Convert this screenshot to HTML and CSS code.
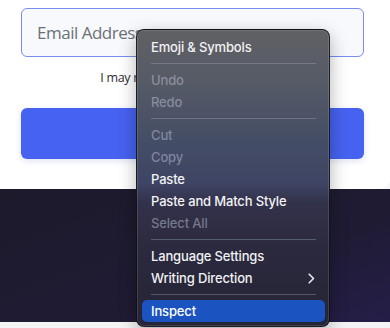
FILE: index.html
```html
<!DOCTYPE html>
<html lang="en">
<head>
    <meta charset="UTF-8">
    <meta name="viewport" content="width=device-width, initial-scale=1.0">
    <title>Newsletter Signup</title>
    <link rel="stylesheet" href="styles.css">
</head>
<body>
    <div class="page">
        <div class="card">
            <form class="signup">
                <input class="email-input" type="email" placeholder="Email Address">
                <p class="note">I may receive occasional updates.</p>
                <button class="submit-btn" type="button"></button>
            </form>
        </div>

        <div class="footer-band"></div>
        <div class="bottom-strip"></div>

        <!-- native context menu, open over the email field -->
        <div class="context-menu">
            <div class="menu-item">Emoji &amp; Symbols</div>
            <div class="menu-sep"></div>
            <div class="menu-item disabled">Undo</div>
            <div class="menu-item disabled">Redo</div>
            <div class="menu-sep"></div>
            <div class="menu-item disabled">Cut</div>
            <div class="menu-item disabled">Copy</div>
            <div class="menu-item">Paste</div>
            <div class="menu-item">Paste and Match Style</div>
            <div class="menu-item disabled">Select All</div>
            <div class="menu-sep"></div>
            <div class="menu-item">Language Settings</div>
            <div class="menu-item has-sub">
                <span>Writing Direction</span>
                <svg class="chevron" width="7" height="11" viewBox="0 0 7 11">
                    <path d="M1.2 1.2 L5.5 5.5 L1.2 9.8" fill="none" stroke="#e8e9ee" stroke-width="1.6" stroke-linecap="round" stroke-linejoin="round"/>
                </svg>
            </div>
            <div class="menu-sep"></div>
            <div class="menu-item active">Inspect</div>
        </div>
    </div>
</body>
</html>
```

FILE: styles.css
```css
* {
    margin: 0;
    padding: 0;
    box-sizing: border-box;
}

body {
    font-family: 'Open Sans', 'Noto Sans', sans-serif;
    background: #f6f6f7;
    color: #333;
}

.page {
    position: relative;
    width: 390px;
    height: 328px;
    overflow: hidden;
}

.card {
    height: 189px;
    background: white;
    border-radius: 0 0 10px 0;
    padding: 8px 26px 0 21px;
    position: relative;
    z-index: 1;
}

.signup {
    display: flex;
    flex-direction: column;
}

.email-input {
    height: 49px;
    border: 1px solid #7a8cf2;
    border-radius: 6px;
    background: #f8f9fd;
    padding: 0 15px;
    font-family: 'Open Sans', sans-serif;
    font-size: 17px;
    letter-spacing: -0.5px;
    color: #333;
    outline: none;
}

.email-input::placeholder {
    color: #6c7076;
}

.note {
    text-align: center;
    font-size: 12.5px;
    letter-spacing: -0.3px;
    line-height: 18px;
    color: #2e2e33;
    margin-top: 12px;
}

.submit-btn {
    height: 51px;
    margin-top: 21px;
    border: none;
    border-radius: 6px;
    background: #4662f0;
    box-shadow: 0 2px 6px rgba(40, 60, 160, 0.15);
}

.footer-band {
    height: 133px;
    background: linear-gradient(160deg, #1d1a2c 0%, #1f1b33 60%, #251e48 100%);
}

.bottom-strip {
    height: 6px;
    background: #f4f4f6;
}

/* macOS style context menu */
.context-menu {
    position: absolute;
    left: 136px;
    top: 29px;
    width: 194px;
    padding: 6px 4px 4px 5px;
    border: 1px solid rgba(10, 10, 14, 0.75);
    border-radius: 8px;
    background: linear-gradient(180deg, #606164 0%, #555a66 18%, #444d66 38%, #3e4463 52%, #33324b 58%, #2a293d 75%, #262537 100%);
    box-shadow: inset 0 0 0 1px rgba(255, 255, 255, 0.12), 0 6px 18px rgba(0, 0, 0, 0.3);
    font-family: Inter, 'Noto Sans', sans-serif;
    font-size: 13px;
    font-weight: 500;
    letter-spacing: -0.15px;
    z-index: 2;
}

.menu-item {
    height: 22px;
    line-height: 22px;
    padding: 0 9px;
    border-radius: 5px;
    color: #f1f1f4;
    display: flex;
    align-items: center;
    justify-content: space-between;
}

.menu-item.disabled {
    color: rgba(190, 196, 214, 0.5);
}

.menu-item.active {
    background: #1b53c1;
    color: white;
}

.chevron {
    margin-right: 1px;
}

.menu-sep {
    height: 1px;
    margin: 5px 9px 5px 9px;
    background: rgba(170, 176, 196, 0.35);
}
```
